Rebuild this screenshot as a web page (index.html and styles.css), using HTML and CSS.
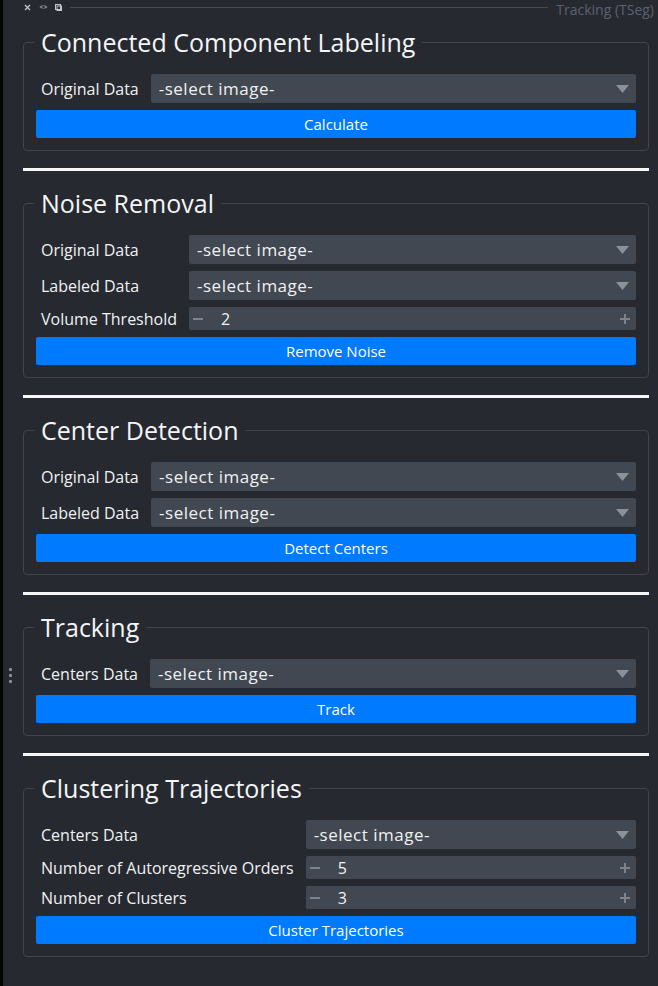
FILE: index.html
```html
<!DOCTYPE html>
<html lang="en">
<head>
<meta charset="utf-8">
<title>Tracking (TSeg)</title>
<link rel="stylesheet" href="styles.css">
</head>
<body>
<div class="edge"></div>
<div class="dock">
  <div class="titlebar">
    <span class="tb-icons">
      <svg class="tb-close" width="7" height="7" viewBox="0 0 7 7"><path d="M1 1L6 6M6 1L1 6" stroke="#c4c6ca" stroke-width="1.3" fill="none"/></svg>
      <svg class="tb-eye" width="9" height="6" viewBox="0 0 9 6"><path d="M0.5 3C2 0.8 7 0.8 8.5 3C7 5.2 2 5.2 0.5 3Z" fill="#7c8087"/><circle cx="4.5" cy="3" r="1.2" fill="#262930"/></svg>
      <svg class="tb-float" width="7" height="7" viewBox="0 0 7 7"><rect x="0.5" y="0.5" width="5" height="5" fill="none" stroke="#c4c6ca" stroke-width="1"/><rect x="2" y="2" width="4.5" height="4.5" fill="none" stroke="#c4c6ca" stroke-width="1"/></svg>
    </span>
    <span class="tb-line"></span>
    <span class="tb-title">Tracking (TSeg)</span>
  </div>
  <div class="main">
    <div class="handle"><i></i><i></i><i></i></div>
    <div class="content">

      <fieldset class="group">
        <legend>Connected Component Labeling</legend>
        <div class="form">
          <span class="lbl">Original Data</span>
          <div class="combo"><span>-select image-</span><svg class="arrow" width="13" height="8" viewBox="0 0 13 8"><path d="M0 0H13L6.5 8Z" fill="#8c9098"/></svg></div>
        </div>
        <button class="btn">Calculate</button>
      </fieldset>

      <div class="sep"></div>

      <fieldset class="group">
        <legend>Noise Removal</legend>
        <div class="form">
          <span class="lbl">Original Data</span>
          <div class="combo"><span>-select image-</span><svg class="arrow" width="13" height="8" viewBox="0 0 13 8"><path d="M0 0H13L6.5 8Z" fill="#8c9098"/></svg></div>
          <span class="lbl">Labeled Data</span>
          <div class="combo"><span>-select image-</span><svg class="arrow" width="13" height="8" viewBox="0 0 13 8"><path d="M0 0H13L6.5 8Z" fill="#8c9098"/></svg></div>
          <span class="lbl">Volume Threshold</span>
          <div class="spin">
            <svg class="minus" width="10" height="10" viewBox="0 0 10 10"><rect x="0" y="4" width="10" height="2" fill="#7e838b"/></svg>
            <span class="val">2</span>
            <svg class="plus" width="10" height="10" viewBox="0 0 10 10"><rect x="0" y="4" width="10" height="2" fill="#7e838b"/><rect x="4" y="0" width="2" height="10" fill="#7e838b"/></svg>
          </div>
        </div>
        <button class="btn">Remove Noise</button>
      </fieldset>

      <div class="sep"></div>

      <fieldset class="group">
        <legend>Center Detection</legend>
        <div class="form">
          <span class="lbl">Original Data</span>
          <div class="combo"><span>-select image-</span><svg class="arrow" width="13" height="8" viewBox="0 0 13 8"><path d="M0 0H13L6.5 8Z" fill="#8c9098"/></svg></div>
          <span class="lbl">Labeled Data</span>
          <div class="combo"><span>-select image-</span><svg class="arrow" width="13" height="8" viewBox="0 0 13 8"><path d="M0 0H13L6.5 8Z" fill="#8c9098"/></svg></div>
        </div>
        <button class="btn">Detect Centers</button>
      </fieldset>

      <div class="sep"></div>

      <fieldset class="group">
        <legend>Tracking</legend>
        <div class="form">
          <span class="lbl">Centers Data</span>
          <div class="combo"><span>-select image-</span><svg class="arrow" width="13" height="8" viewBox="0 0 13 8"><path d="M0 0H13L6.5 8Z" fill="#8c9098"/></svg></div>
        </div>
        <button class="btn">Track</button>
      </fieldset>

      <div class="sep"></div>

      <fieldset class="group">
        <legend>Clustering Trajectories</legend>
        <div class="form">
          <span class="lbl">Centers Data</span>
          <div class="combo"><span>-select image-</span><svg class="arrow" width="13" height="8" viewBox="0 0 13 8"><path d="M0 0H13L6.5 8Z" fill="#8c9098"/></svg></div>
          <span class="lbl">Number of Autoregressive Orders</span>
          <div class="spin">
            <svg class="minus" width="10" height="10" viewBox="0 0 10 10"><rect x="0" y="4" width="10" height="2" fill="#7e838b"/></svg>
            <span class="val">5</span>
            <svg class="plus" width="10" height="10" viewBox="0 0 10 10"><rect x="0" y="4" width="10" height="2" fill="#7e838b"/><rect x="4" y="0" width="2" height="10" fill="#7e838b"/></svg>
          </div>
          <span class="lbl">Number of Clusters</span>
          <div class="spin">
            <svg class="minus" width="10" height="10" viewBox="0 0 10 10"><rect x="0" y="4" width="10" height="2" fill="#7e838b"/></svg>
            <span class="val">3</span>
            <svg class="plus" width="10" height="10" viewBox="0 0 10 10"><rect x="0" y="4" width="10" height="2" fill="#7e838b"/><rect x="4" y="0" width="2" height="10" fill="#7e838b"/></svg>
          </div>
        </div>
        <button class="btn">Cluster Trajectories</button>
      </fieldset>

    </div>
  </div>
</div>
</body>
</html>
```

FILE: styles.css
```css
* { box-sizing: border-box; }

html, body {
  margin: 0;
  padding: 0;
  width: 658px;
  height: 986px;
  overflow: hidden;
  background: #262930;
  font-family: "Open Sans", "Noto Sans", sans-serif;
  color: #f0f1f2;
}

body {
  display: flex;
  flex-direction: row;
}

.edge {
  width: 3px;
  flex: none;
  background: #050505;
}

.dock {
  flex: 1;
  display: flex;
  flex-direction: column;
  min-width: 0;
}

.titlebar {
  height: 14px;
  display: flex;
  align-items: flex-start;
  padding-left: 21px;
}

.tb-icons {
  display: flex;
  align-items: center;
  height: 14px;
}

.tb-close { margin-right: 8px; }
.tb-eye { margin-right: 7px; }

.tb-line {
  flex: 1;
  height: 1px;
  background: #464a53;
  margin: 7px 8px 0 8px;
}

.tb-title {
  flex: none;
  font-size: 14px;
  line-height: 19px;
  height: 19px;
  color: #5b6170;
  padding-right: 4px;
  white-space: nowrap;
}

.main {
  display: flex;
  flex-direction: row;
  flex: 1;
}

.handle {
  width: 20px;
  flex: none;
  padding-top: 654px;
  padding-left: 6px;
  display: flex;
  flex-direction: column;
  gap: 3px;
}

.handle i {
  display: block;
  width: 3px;
  height: 3px;
  border-radius: 1px;
  background: #8b8f97;
}

.content {
  width: 626px;
  flex: none;
  padding-top: 13px;
  display: flex;
  flex-direction: column;
  gap: 17px;
}

.group {
  margin: 0;
  min-width: 0;
  width: 626px;
  border: 1px solid #41454e;
  border-radius: 4px;
  padding: 17px 12px 12px 12px;
  display: flex;
  flex-direction: column;
  gap: 7px;
}

.group legend {
  font-size: 25px;
  line-height: 30px;
  padding: 0 7px;
  margin-left: -2px;
  color: #f4f5f6;
}

.form {
  display: grid;
  grid-template-columns: max-content 1fr;
  column-gap: 12px;
  row-gap: 7px;
  align-items: center;
}

.lbl {
  font-size: 16px;
  line-height: 20px;
  padding-left: 5px;
  white-space: nowrap;
}

.combo {
  height: 29px;
  background: #414851;
  border-radius: 2px;
  display: flex;
  align-items: center;
  justify-content: space-between;
  padding: 0 7px 0 8px;
  font-size: 17px;
  letter-spacing: 0.5px;
}

.spin {
  height: 23px;
  background: #414851;
  border-radius: 2px;
  display: flex;
  align-items: center;
  padding: 0 6px 0 4px;
  font-size: 16px;
}

.spin .val {
  flex: 1;
  margin-left: 18px;
}

.btn {
  height: 28px;
  border: none;
  border-radius: 2px;
  background: #007aff;
  color: #ffffff;
  font-family: "Open Sans", "Noto Sans", sans-serif;
  font-size: 15px;
  padding: 0;
  display: block;
  width: 100%;
}

.sep {
  height: 3px;
  background: #f7f7f7;
  flex: none;
}
```
